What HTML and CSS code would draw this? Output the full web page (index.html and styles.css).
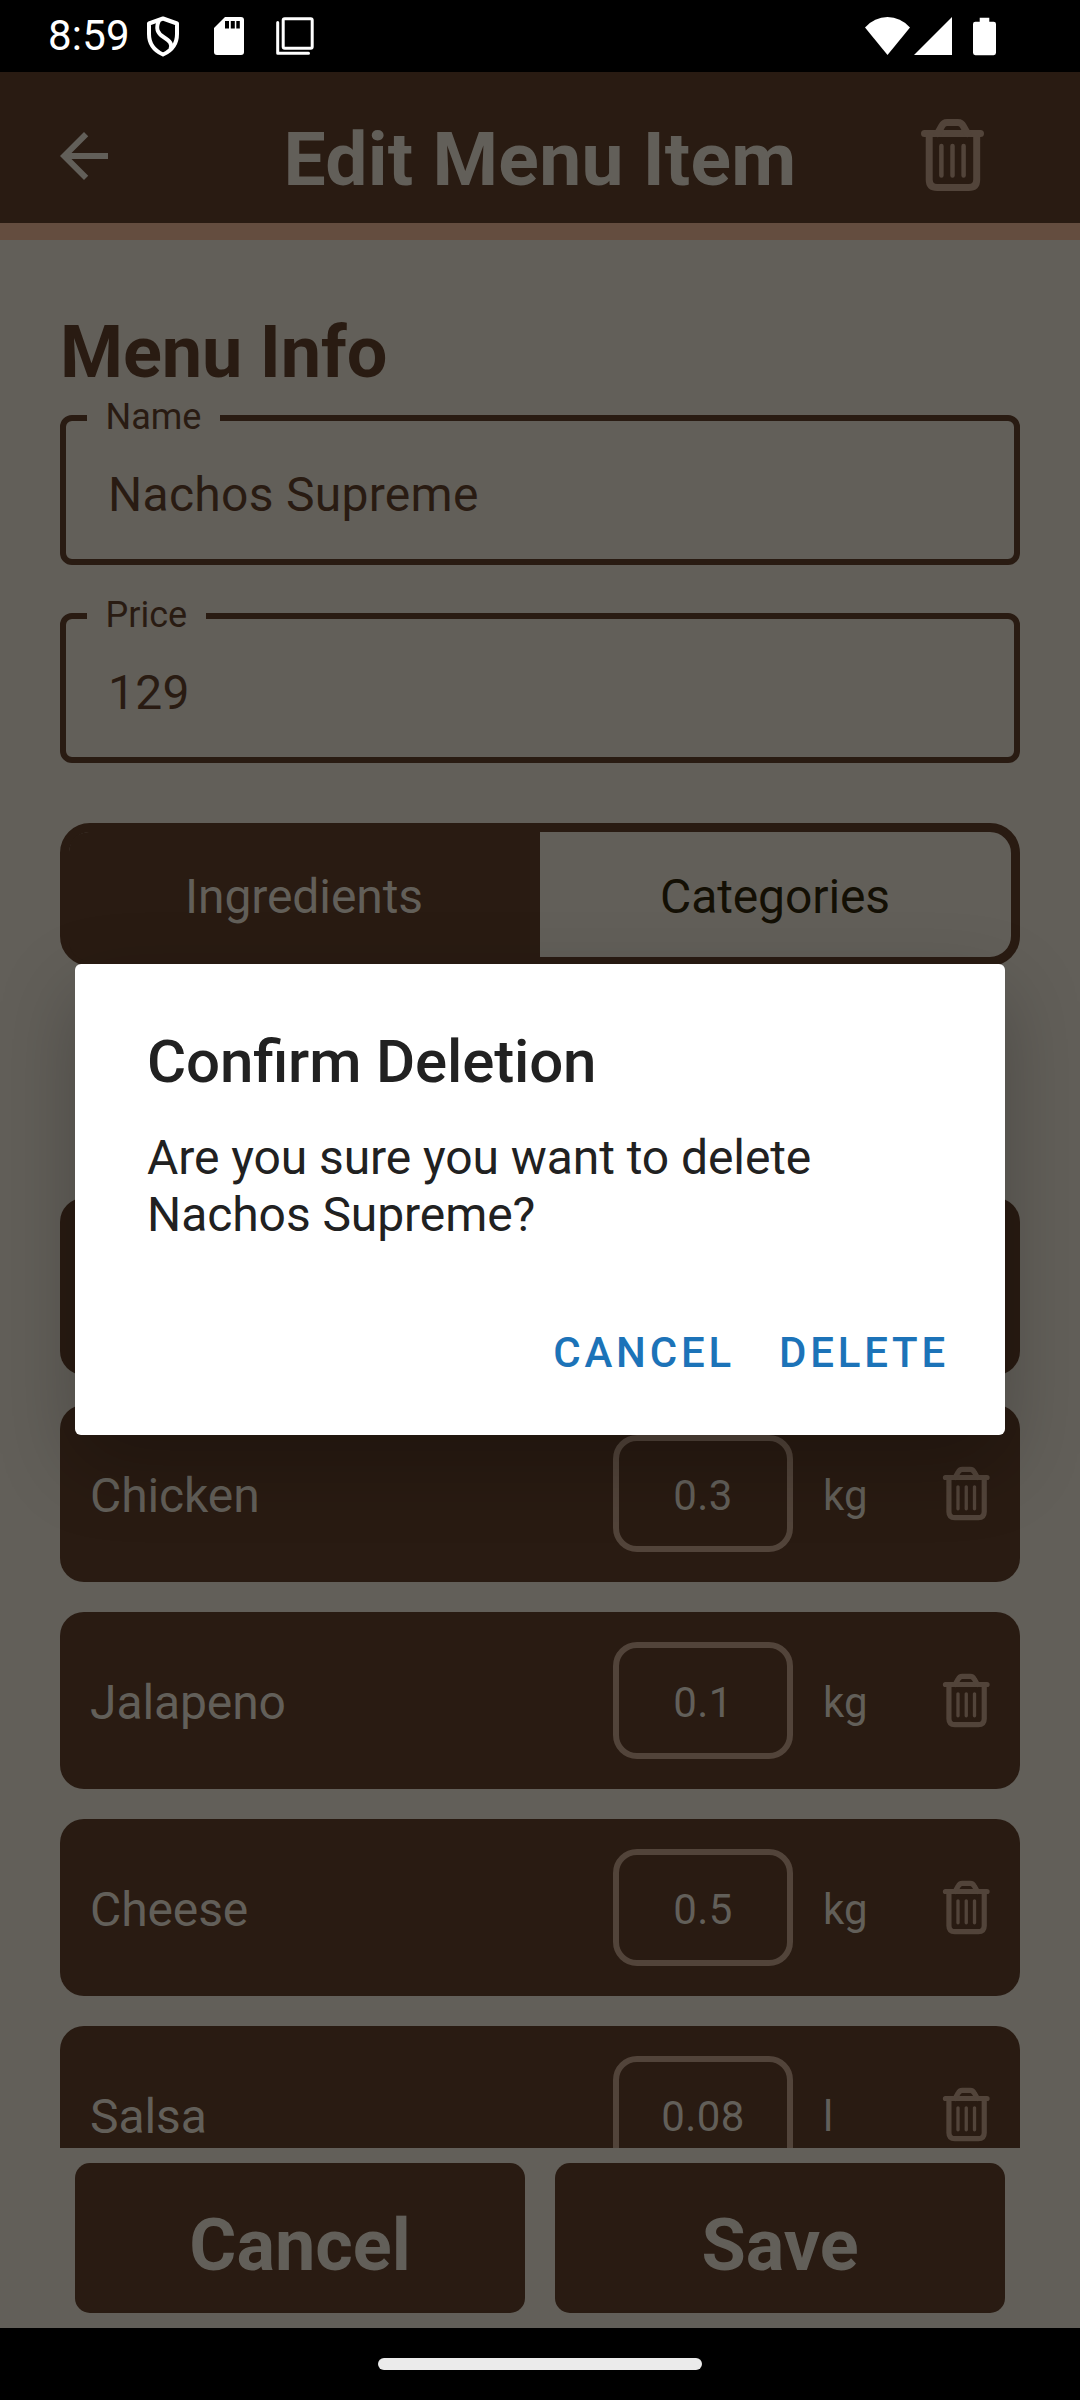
FILE: index.html
```html
<!DOCTYPE html>
<html lang="en">
<head>
<meta charset="utf-8">
<title>Edit Menu Item</title>
<link rel="stylesheet" href="styles.css">
</head>
<body>
<svg class="sprite" aria-hidden="true">
  <symbol id="trash" viewBox="10 8 65 74">
    <g fill="none" stroke="currentColor" stroke-linecap="round" stroke-linejoin="round">
      <path stroke-width="7" d="M14.5 23.5H70.5M19.200 24V69.500Q19.200 77.500 27.200 77.500H58.700Q66.700 77.500 66.700 69.500V24"/>
      <path stroke-width="7" d="M27.500 23.500L31.500 16.500Q33.500 12.500 37 12.500H48Q51.500 12.500 53.500 16.500L57.500 23.500"/>
      <path stroke-width="4.500" d="M31.400 36V65.500M42.500 36V65.500M53.600 36V65.500"/>
    </g>
  </symbol>
</svg>
<div class="screen">
  <div class="statusbar">
    <span class="clock">8:59</span>
    <svg class="shield" viewBox="0 0 34 41"><path d="M17 2.500L3 7.500V18C3 27.500 8 34.500 17 38.500C26 34.500 31 27.500 31 18V7.500Z"/><path d="M13 4.500C9 13 12 17.500 17.500 21C24 25 26.500 28 24.500 33"/></svg>
    <svg class="sdcard" viewBox="0 0 30 38"><path fill="#fff" d="M11 0H27a3 3 0 0 1 3 3V35a3 3 0 0 1-3 3H3a3 3 0 0 1-3-3V11Z"/><path fill="#000" d="M11 4h4v7.500h-4zM16.800 4h4v7.500h-4zM22.300 4h3.500v7.500h-3.500z"/></svg>
    <svg class="squares" viewBox="0 0 38 38"><rect x="7.200" y="1.700" width="29" height="29.500" rx="1.500"/><path d="M1.700 5.500V36.300H32.500"/></svg>
    <svg class="wifi" viewBox="0 0 45 38"><path d="M0 10.500Q9.500 0 22.500 0T45 10.500L22.500 38Z"/></svg>
    <svg class="signal" viewBox="0 0 38 38"><path d="M38 0V38H0Z"/></svg>
    <svg class="battery" viewBox="0 0 24 39"><path d="M7 0H17V4H21.500A2.500 2.500 0 0 1 24 6.500V36.500A2.500 2.500 0 0 1 21.500 39H2.500A2.500 2.500 0 0 1 0 36.500V6.500A2.500 2.500 0 0 1 2.500 4H7Z"/></svg>
  </div>

  <header class="appbar">
    <svg class="back" viewBox="4 4 16 16"><path d="M20 11H7.830l5.590-5.590L12 4l-8 8 8 8 1.410-1.410L7.830 13H20v-2z"/></svg>
    <h1>Edit Menu Item</h1>
    <svg class="trash trash-large"><use href="#trash"/></svg>
  </header>

  <main class="form">
    <h2>Menu Info</h2>
    <fieldset class="field"><legend>Name</legend><div class="value">Nachos Supreme</div></fieldset>
    <fieldset class="field"><legend>Price</legend><div class="value">129</div></fieldset>

    <div class="tabs">
      <div class="tab active">Ingredients</div>
      <div class="tab">Categories</div>
    </div>

    <div class="list">
      <div class="row"></div>
      <div class="row">
        <span class="name">Chicken</span><span class="amount">0.3</span><span class="unit">kg</span>
        <svg class="trash"><use href="#trash"/></svg>
      </div>
      <div class="row">
        <span class="name">Jalapeno</span><span class="amount">0.1</span><span class="unit">kg</span>
        <svg class="trash"><use href="#trash"/></svg>
      </div>
      <div class="row">
        <span class="name">Cheese</span><span class="amount">0.5</span><span class="unit">kg</span>
        <svg class="trash"><use href="#trash"/></svg>
      </div>
      <div class="row">
        <span class="name">Salsa</span><span class="amount">0.08</span><span class="unit">l</span>
        <svg class="trash"><use href="#trash"/></svg>
      </div>
    </div>
  </main>

  <footer class="actions">
    <div class="button">Cancel</div>
    <div class="button">Save</div>
  </footer>
  <div class="navbar"><div class="pill"></div></div>

  <div class="dialog">
    <h3>Confirm Deletion</h3>
    <p>Are you sure you want to delete<br>Nachos Supreme?</p>
    <div class="dialog-actions"><span>CANCEL</span><span>DELETE</span></div>
  </div>
</div>
</body>
</html>
```
FILE: styles.css
```css
:root {
  --surface: #625f59;
  --brown: #291b12;
  --tan: #52443a;
}

* { box-sizing: border-box; margin: 0; padding: 0; }

body { font-family: Roboto, "Liberation Sans", sans-serif; background: #000; }

svg { display: block; flex: none; }
.sprite { position: absolute; width: 0; height: 0; }

.screen {
  position: relative;
  width: 1080px;
  height: 2400px;
  display: flex;
  flex-direction: column;
  overflow: hidden;
  background: var(--surface);
}

.statusbar {
  height: 72px;
  flex: none;
  display: flex;
  align-items: center;
  padding: 0 84px 0 48px;
  background: #000;
  color: #fff;
}
.clock { width: 98px; font-size: 42px; line-height: 72px; letter-spacing: 0.2px; }
.statusbar svg { fill: #fff; }
.shield { width: 34px; height: 41px; }
.statusbar .shield, .statusbar .squares { fill: none; stroke: #fff; }
.shield { stroke-width: 4; stroke-linejoin: round; }
.sdcard { width: 30px; height: 38px; margin-left: 34px; }
.squares { width: 38px; height: 38px; margin-left: 32px; stroke-width: 3; stroke-linecap: round; stroke-linejoin: round; }
.wifi { width: 45px; height: 38px; margin-left: auto; }
.signal { width: 38px; height: 38px; margin-left: 4px; }
.battery { width: 23px; height: 39px; margin-left: 21px; }

.appbar {
  height: 168px;
  flex: none;
  display: grid;
  grid-template-columns: 255px 1fr 255px;
  align-items: center;
  padding-top: 16px;
  background: var(--brown);
  border-bottom: 17px solid #644d3f;
  color: var(--surface);
}
.back { width: 48px; height: 48px; margin-left: 60px; fill: currentColor; }
.appbar h1 {
  font-size: 75px;
  line-height: 90px;
  padding-top: 6px;
  letter-spacing: 0.280px;
  text-align: center;
  white-space: nowrap;
}
.trash { width: 48.500px; height: 55px; color: var(--tan); }
.trash-large { width: 65px; height: 74px; justify-self: center; margin-bottom: 2px; }

.form {
  flex: 1;
  min-height: 0;
  display: flex;
  flex-direction: column;
  padding: 71px 60px 0;
  color: var(--brown);
}
.form h2 { font-size: 72px; line-height: 84px; margin-bottom: 4px; flex: none; letter-spacing: -0.130px; }

.field {
  height: 166px;
  flex: none;
  border: 6px solid var(--brown);
  border-radius: 12px;
  padding: 0 42px 0 21px;
  margin-bottom: 32px;
  min-width: 0;
}
.field legend { font-size: 36px; line-height: 36px; padding: 0 18.500px 2px; }
.value { font-size: 48px; line-height: 116px; padding-left: 21px; letter-spacing: 0.280px; }

.tabs {
  height: 143px;
  flex: none;
  display: grid;
  grid-template-columns: 1fr 1fr;
  margin-top: 28px;
  border: 9px solid var(--brown);
  border-radius: 30px;
}
.tab { font-size: 48px; line-height: 129px; text-align: center; color: #130f04; letter-spacing: -0.100px; padding-right: 1px; }
.tab.active { background: var(--brown); color: var(--surface); border-radius: 20px 0 0 20px; }

.list {
  flex: 1;
  min-height: 0;
  display: flex;
  flex-direction: column;
  gap: 30px;
  margin-top: 232px;
  overflow: hidden;
}
.row {
  height: 177px;
  flex: none;
  display: flex;
  align-items: center;
  padding: 0 29.500px 0 30px;
  border-radius: 24px;
  background: var(--brown);
  color: var(--surface);
}
.name { flex: 1; font-size: 48px; line-height: 60px; padding-top: 4px; letter-spacing: -0.100px; }
.amount {
  width: 180px;
  height: 117px;
  border: 6px solid var(--tan);
  border-radius: 24px;
  font-size: 42px;
  line-height: 109px;
  letter-spacing: 0.400px;
  text-align: center;
}
.unit { width: 119px; margin-left: 30px; font-size: 42px; line-height: 60px; padding-top: 4px; }

.actions { flex: none; display: flex; gap: 30px; padding: 15px 75px; }
.button {
  flex: 1;
  height: 150px;
  border-radius: 15px;
  background: var(--brown);
  color: var(--surface);
  font-size: 72px;
  font-weight: 700;
  line-height: 165px;
  text-align: center;
}

.navbar { height: 72px; flex: none; display: flex; align-items: center; justify-content: center; background: #000; }
.pill { width: 324px; height: 12px; border-radius: 6px; background: #ebebeb; }

/* Modal floats above the dimmed form */
.dialog {
  position: absolute;
  left: 75px;
  top: 964px;
  width: 930px;
  height: 471px;
  padding: 62px 56px 0 72px;
  border-radius: 6px;
  background: #fff;
  color: #212121;
  box-shadow: 0 28px 80px rgba(0, 0, 0, 0.240);
}
.dialog h3 {
  font-size: 60px;
  font-weight: 500;
  line-height: 72px;
  letter-spacing: -0.150px;
  font-feature-settings: "liga" 1;
}
.dialog p { margin-top: 31px; font-size: 48px; line-height: 57px; letter-spacing: -0.080px; white-space: nowrap; }
.dialog-actions {
  display: flex;
  justify-content: flex-end;
  gap: 44px;
  margin-top: 80px;
  font-size: 42px;
  font-weight: 500;
  line-height: 60px;
  letter-spacing: 3.800px;
  color: #1c73b8;
}
```
